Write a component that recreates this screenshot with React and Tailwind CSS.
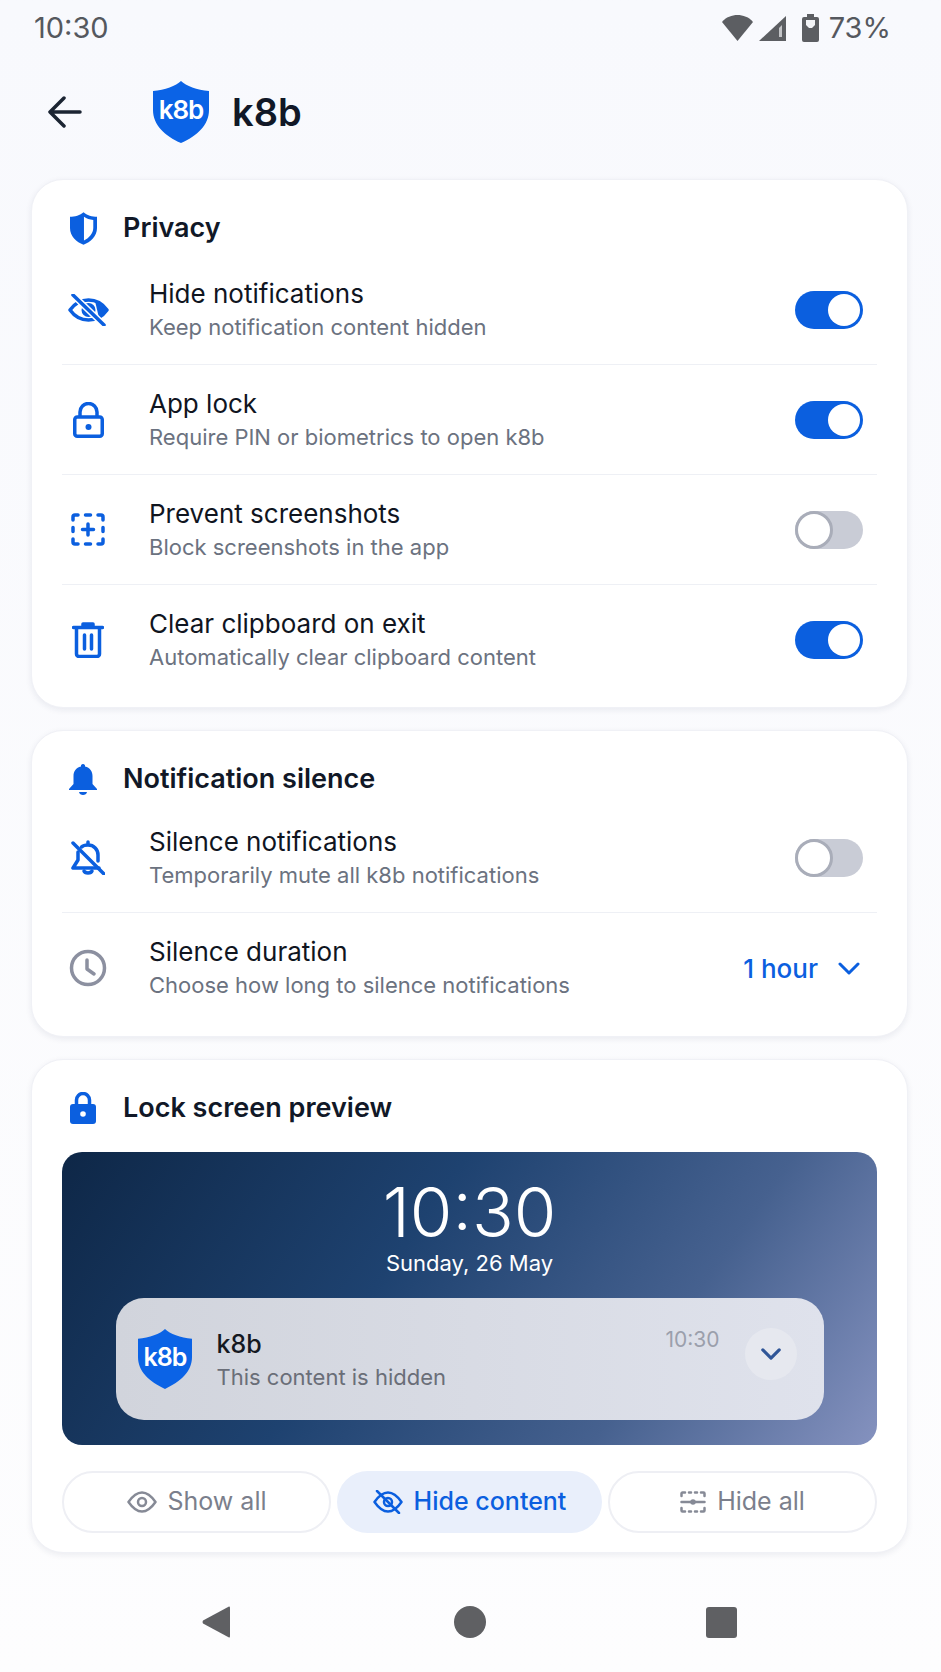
const BLUE = '#0b5fdf';

function ShieldLogo({ className }) {
  return (
    <svg viewBox="0 0 56 62" className={className}>
      <path d="M28 0C33 5 44 9 56 10V29C56 44 44 55 28 62C12 55 0 44 0 29V10C12 9 23 5 28 0Z" fill="#0b63e6" />
      <text x="28" y="38" textAnchor="middle" fill="#fff" fontSize="26" fontWeight="600" letterSpacing="-1" fontFamily="Inter, sans-serif">k8b</text>
    </svg>
  );
}

function EyeOffSolid({ className }) {
  return (
    <svg viewBox="0 0 41 32" className={className} fill="none" stroke={BLUE} strokeWidth="3.500" strokeLinecap="round" strokeLinejoin="round">
      <path d="M2 16C7 9 13 6 20.500 6S34 9 39 16C34 23 28 26 20.500 26S7 23 2 16Z" />
      <circle cx="20.500" cy="16" r="7" fill={BLUE} stroke="none" />
      <path d="M27 7L39 16L31 24Z" fill={BLUE} stroke="none" />
      <path d="M5 1L36 31" stroke="#fff" strokeWidth="6.500" />
      <path d="M5 1L36 31" />
    </svg>
  );
}

function LockOutline({ className }) {
  return (
    <svg viewBox="0 0 31 36" className={className} fill="none" stroke={BLUE} strokeWidth="3.500">
      <path d="M7 15V10a8.500 8.500 0 0 1 17 0v5" />
      <rect x="1.750" y="15" width="27.500" height="19.250" rx="2.500" />
      <circle cx="15.500" cy="25" r="3" fill={BLUE} stroke="none" />
    </svg>
  );
}

function ScreenshotIcon({ className }) {
  return (
    <svg viewBox="0 0 34 33" className={className} fill="none" stroke={BLUE} strokeWidth="3.500" strokeLinecap="round">
      <path d="M2 7V4a2 2 0 0 1 2-2h3M14.500 2h5M27 2h3a2 2 0 0 1 2 2v3M2 14.500v4M32 14.500v4M2 26v3a2 2 0 0 0 2 2h3M14.500 31h5M27 31h3a2 2 0 0 0 2-2v-3" />
      <path d="M17 11v11M11.500 16.500h11" />
    </svg>
  );
}

function TrashIcon({ className }) {
  return (
    <svg viewBox="0 0 32 36" className={className} fill="none" stroke={BLUE} strokeWidth="3.500" strokeLinecap="round" strokeLinejoin="round">
      <path d="M1.500 5.500h29M11 5V2h10v3" />
      <path d="M4.500 6v26a2.500 2.500 0 0 0 2.500 2.500h18a2.500 2.500 0 0 0 2.500-2.500V6" />
      <path d="M12.500 13v14M19.500 13v14" />
    </svg>
  );
}

function BellOffIcon({ className }) {
  return (
    <svg viewBox="0 0 34 35" className={className} fill="none" stroke={BLUE} strokeWidth="3.500" strokeLinecap="round" strokeLinejoin="round">
      <path d="M17 5V2M10.500 7C12 5.500 14.500 5 17 5C23 5 27 9.500 27 15V21" />
      <path d="M7 12V20L2 28H28" />
      <path d="M13 31C14 33.500 20 33.500 21 31" />
      <path d="M2 3L33 34" />
    </svg>
  );
}

function ClockIcon({ className }) {
  return (
    <svg viewBox="0 0 38 38" className={className} fill="none" stroke="#8c90a0" strokeWidth="3.500" strokeLinecap="round" strokeLinejoin="round">
      <circle cx="19" cy="19" r="16.500" />
      <path d="M18 11V20L25 25" />
    </svg>
  );
}

function PrivacyShield({ className }) {
  return (
    <svg viewBox="0 0 29 35" className={className}>
      <path d="M14.500 0C18 3 24 5 29 5V17C29 26 22 32 14.500 35C7 32 0 26 0 17V5C5 5 11 3 14.500 0Z" fill={BLUE} />
      <path d="M15 5C18 7 21 8 25 8.500V17C25 23 20 28 15 30.500Z" fill="#fff" />
    </svg>
  );
}

function BellSolid({ className }) {
  return (
    <svg viewBox="0 0 28 31" className={className} fill={BLUE}>
      <path d="M14 0a2 2 0 0 1 2 2.500C21 3.500 23.500 7.500 23.500 12V20L28 25V26H0V25L4.500 20V12C4.500 7.500 7 3.500 12 2.500A2 2 0 0 1 14 0Z" />
      <path d="M10 28H18C17.500 32 10.500 32 10 28Z" />
    </svg>
  );
}

function LockSolid({ className }) {
  return (
    <svg viewBox="0 0 26 32" className={className}>
      <path d="M6.500 14V8a6.500 6.500 0 0 1 13 0v6" fill="none" stroke={BLUE} strokeWidth="3.500" />
      <rect x="0" y="12" width="26" height="20" rx="3" fill={BLUE} />
      <circle cx="13" cy="22" r="2.800" fill="#fff" />
    </svg>
  );
}

function Chevron({ className, color, stroke = 3 }) {
  return (
    <svg viewBox="0 0 22 13" className={className} fill="none" stroke={color} strokeWidth={stroke} strokeLinecap="round" strokeLinejoin="round">
      <path d="M2 2L11 11L20 2" />
    </svg>
  );
}

function Toggle({ on }) {
  if (on) {
    return (
      <div className="w-[68px] h-[38px] mr-[14px] rounded-full bg-[#0b5fdf] flex items-center justify-end pr-[3px] shrink-0">
        <div className="w-[32px] h-[32px] rounded-full bg-white" />
      </div>
    );
  }
  return (
    <div className="w-[68px] h-[38px] mr-[14px] rounded-full bg-[#c9ccd6] flex items-center shrink-0">
      <div className="w-[38px] h-[38px] rounded-full bg-white border-[3px] border-[#a9adb9]" />
    </div>
  );
}

function Row({ icon, title, sub, last, children }) {
  return (
    <div className={`flex items-center h-[110px] ${last ? '' : 'border-b border-[#eef0f5]'}`}>
      <div className="w-[52px] flex justify-center shrink-0">{icon}</div>
      <div className="ml-[35px] flex-1">
        <div className="text-[26px] leading-[34px] text-[#10151f] -mt-[1px]">{title}</div>
        <div className="text-[22px] leading-[30px] text-[#6b7280] mt-[1px]">{sub}</div>
      </div>
      {children}
    </div>
  );
}

function CardHeader({ icon, title, gap }) {
  return (
    <div className={`flex items-center h-[42px] mt-[27px] ${gap}`}>
      <div className="w-[42px] flex justify-center shrink-0">{icon}</div>
      <div className="ml-[19px] text-[27px] font-semibold text-[#111827]">{title}</div>
    </div>
  );
}

function Card({ children }) {
  return (
    <div className="bg-white rounded-[32px] border border-[#f0f1f6] shadow-[0_2px_6px_rgba(30,40,80,0.08)] px-[30px]">
      {children}
    </div>
  );
}

function ModeButton({ active, icon, label }) {
  return (
    <div className={`flex-1 h-[62px] rounded-full flex items-center justify-center gap-[11px] text-[25px] ${active ? 'bg-[#e9effb] text-[#0b5fdf] font-medium' : 'border-2 border-[#eeeff4] text-[#7b7f8c]'}`}>
      {icon}
      {label}
    </div>
  );
}

export default function App() {
  return (
    <div className="w-[941px] h-[1672px] bg-gradient-to-b from-[#f8f9fd] to-[#fdfdfe] font-['Inter',sans-serif] overflow-hidden">
      {/* status bar */}
      <div className="h-[56px] flex items-center justify-between pl-[34px] pr-[50px] text-[29px] text-[#55585e]">
        <span>10:30</span>
        <div className="flex items-center">
          <svg viewBox="0 0 31 26" className="w-[31px] h-[26px]" fill="#5c5e62">
            <path d="M0 7C4 2 10 0 15.500 0S27 2 31 7L15.500 26Z" />
          </svg>
          <svg viewBox="0 0 27 25" className="w-[27px] h-[25px] ml-[6px]">
            <path d="M27 0V25H0Z" fill="#5c5e62" />
            <path d="M23 9V21H20V12Z" fill="#c3c4c7" />
          </svg>
          <svg viewBox="0 0 17 28" className="w-[17px] h-[28px] ml-[16px]" fill="#5c5e62">
            <path d="M5 0H12V3H15A2 2 0 0 1 17 5V26A2 2 0 0 1 15 28H2A2 2 0 0 1 0 26V5A2 2 0 0 1 2 3H5Z" />
            <path d="M4 6H13V11L10 14H7L4 11Z" fill="#f3f4f7" />
          </svg>
          <span className="ml-[10px]">73%</span>
        </div>
      </div>

      {/* app bar */}
      <div className="h-[123px] flex items-start pt-[25px]">
        <svg viewBox="0 0 34 32" className="w-[34px] h-[32px] ml-[48px] mt-[15px]" fill="none" stroke="#1b2432" strokeWidth="3.500" strokeLinecap="round" strokeLinejoin="round">
          <path d="M32 16H3M16 2L2 16L16 30" />
        </svg>
        <ShieldLogo className="w-[56px] h-[62px] ml-[71px]" />
        <span className="ml-[23px] text-[38px] leading-[62px] font-semibold text-[#111827]">k8b</span>
      </div>

      <div className="ml-[31px] w-[877px] flex flex-col gap-[22px]">
        <Card>
          <CardHeader gap="mb-[6px]" icon={<PrivacyShield className="w-[27px] h-[33px]" />} title="Privacy" />
          <Row icon={<EyeOffSolid className="w-[41px] h-[32px]" />} title="Hide notifications" sub="Keep notification content hidden">
            <Toggle on />
          </Row>
          <Row icon={<LockOutline className="w-[31px] h-[36px]" />} title="App lock" sub="Require PIN or biometrics to open k8b">
            <Toggle on />
          </Row>
          <Row icon={<ScreenshotIcon className="w-[34px] h-[33px]" />} title="Prevent screenshots" sub="Block screenshots in the app">
            <Toggle />
          </Row>
          <Row last icon={<TrashIcon className="w-[32px] h-[36px]" />} title="Clear clipboard on exit" sub="Automatically clear clipboard content">
            <Toggle on />
          </Row>
          <div className="h-[12px]" />
        </Card>

        <Card>
          <CardHeader gap="mb-[3px]" icon={<BellSolid className="w-[28px] h-[31px]" />} title="Notification silence" />
          <Row icon={<BellOffIcon className="w-[34px] h-[35px]" />} title="Silence notifications" sub="Temporarily mute all k8b notifications">
            <Toggle />
          </Row>
          <Row last icon={<ClockIcon className="w-[38px] h-[38px]" />} title="Silence duration" sub="Choose how long to silence notifications">
            <div className="flex items-center text-[26px] text-[#0b5fdf] font-medium mr-[17px]">
              1 hour
              <Chevron className="w-[22px] h-[13px] ml-[20px]" color="#0b5fdf" />
            </div>
          </Row>
          <div className="h-[13px]" />
        </Card>

        <Card>
          <CardHeader icon={<LockSolid className="w-[26px] h-[32px]" />} title="Lock screen preview" />
          <div className="mt-[23px] h-[293px] rounded-[20px] bg-[linear-gradient(125deg,#0e2747_0%,#1e4270_40%,#46618f_72%,#8592bf_100%)] flex flex-col items-center pt-[25px]">
            <div className="text-[69px] leading-[70px] font-light text-white">10:30</div>
            <div className="text-[22px] leading-[30px] text-white mt-[1px]">Sunday, 26 May</div>
            <div className="mt-[20px] w-[708px] h-[122px] rounded-[28px] bg-gradient-to-r from-[#d1d4dc] to-[#dfe2ec] flex items-center pl-[22px]">
              <ShieldLogo className="w-[54px] h-[60px] shrink-0" />
              <div className="ml-[25px] w-[449px]">
                <div className="text-[25px] leading-[34px] font-medium text-[#141821]">k8b</div>
                <div className="text-[22px] leading-[30px] text-[#6a6e78] mt-[1px]">This content is hidden</div>
              </div>
              <div className="text-[21px] text-[#9b9fac] self-start mt-[26px]">10:30</div>
              <div className="ml-[25px] mb-[10px] w-[52px] h-[52px] rounded-full bg-[#e6e8ef] flex items-center justify-center shrink-0">
                <Chevron className="w-[20px] h-[12px]" color="#2f5597" stroke={3.500} />
              </div>
            </div>
          </div>
          <div className="mt-[26px] mb-[19px] flex gap-[6px]">
            <ModeButton
              label="Show all"
              icon={
                <svg viewBox="0 0 30 22" className="w-[30px] h-[22px]" fill="none" stroke="#868a96" strokeWidth="2.500" strokeLinejoin="round">
                  <path d="M1.500 11C6 4.500 10 1.500 15 1.500S24 4.500 28.500 11C24 17.500 20 20.500 15 20.500S6 17.500 1.500 11Z" />
                  <circle cx="15" cy="11" r="4" />
                </svg>
              }
            />
            <ModeButton
              active
              label="Hide content"
              icon={
                <svg viewBox="0 0 30 24" className="w-[30px] h-[24px]" fill="none" stroke="#0b5fdf" strokeWidth="2.500" strokeLinecap="round" strokeLinejoin="round">
                  <path d="M1.500 12C6 5.500 10 2.500 15 2.500S24 5.500 28.500 12C24 18.500 20 21.500 15 21.500S6 18.500 1.500 12Z" />
                  <circle cx="15" cy="12" r="4" />
                  <path d="M4 1L26 23" />
                </svg>
              }
            />
            <ModeButton
              label="Hide all"
              icon={
                <svg viewBox="0 0 26 22" className="w-[26px] h-[22px]" fill="none" stroke="#868a96" strokeWidth="2.500" strokeLinecap="round">
                  <path d="M1.500 5V2.500a1 1 0 0 1 1-1H5M9 1.500h2M15 1.500h2M21 1.500h2.500a1 1 0 0 1 1 1V5M1.500 17v2.500a1 1 0 0 0 1 1H5M9 20.500h2M15 20.500h2M21 20.500h2.500a1 1 0 0 0 1-1V17" />
                  <path d="M1.500 11h23" />
                  <circle cx="13" cy="11" r="1.500" fill="#868a96" />
                </svg>
              }
            />
          </div>
        </Card>
      </div>

      {/* nav bar */}
      <div className="mt-[53px] flex items-center">
        <svg viewBox="0 0 28 32" className="w-[28px] h-[32px] ml-[202px]" fill="#5f6063">
          <path d="M27 0.500Q28 0 28 2V30Q28 32 27 31.500L1 17.500Q0 16 1 14.500Z" />
        </svg>
        <div className="w-[32px] h-[32px] rounded-full bg-[#5f6063] ml-[224px]" />
        <div className="w-[31px] h-[31px] rounded-[3px] bg-[#5f6063] ml-[220px]" />
      </div>
    </div>
  );
}
